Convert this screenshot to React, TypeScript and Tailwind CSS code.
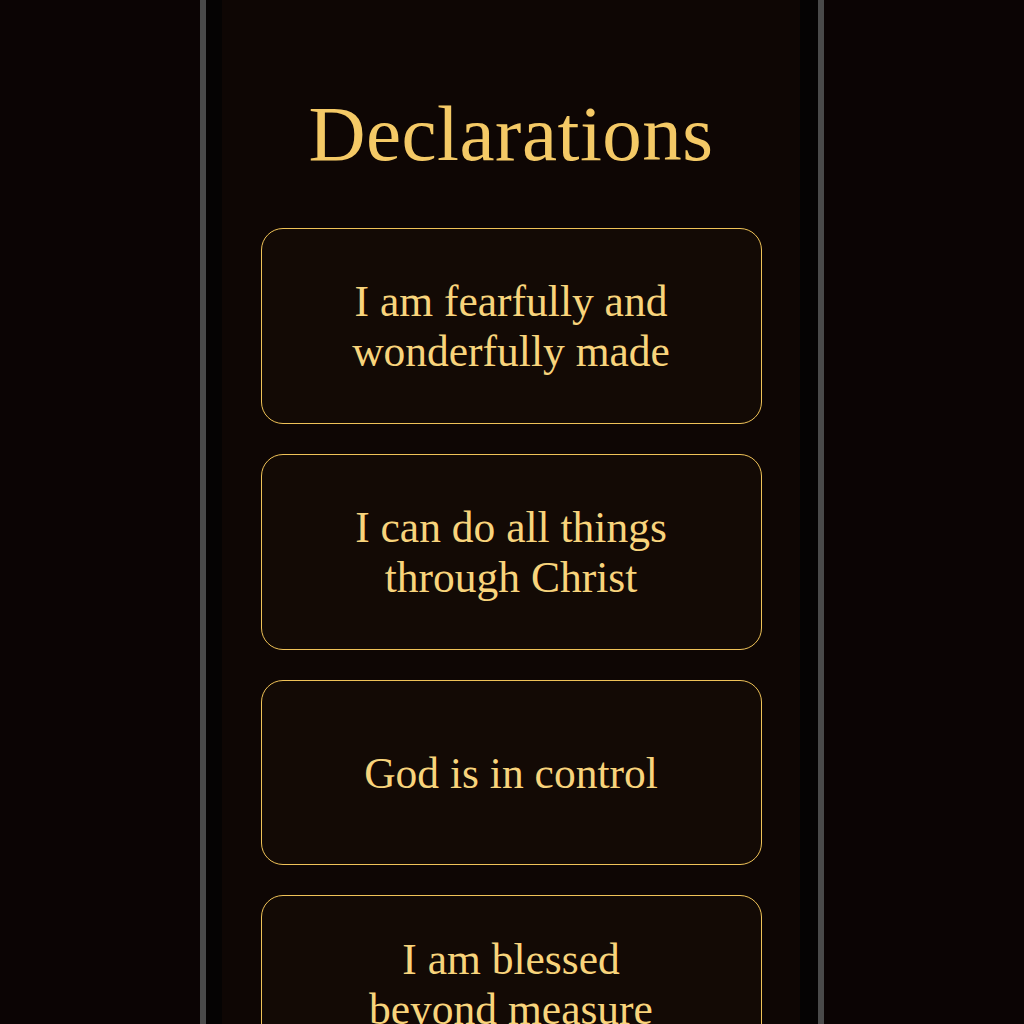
import React from "react";

const items = [
  ["I am fearfully and", "wonderfully made"],
  ["I can do all things", "through Christ"],
  ["God is in control"],
  ["I am blessed", "beyond measure"],
];

export default function App() {
  return (
    <div className="w-[1024px] h-[1024px] overflow-hidden bg-[#0b0404] flex justify-center" style={{ fontFamily: '"Liberation Serif", "DejaVu Serif", serif' }}>
      <div className="flex h-full">
        <div className="w-[6px] h-full bg-[#4a4a4a]" />
        <div className="w-[16px] h-full bg-[#050303]" />
        <div className="w-[578px] h-full bg-[#0e0604] flex flex-col items-center">
          <h1 className="mt-[90px] text-[79px] leading-[88px] text-[#f4c966] tracking-[0.5px]">Declarations</h1>
          <div className="mt-[50px] flex flex-col gap-[30px] w-[501px]">
            {items.map((lines, i) => (
              <div
                key={i}
                className={`rounded-[22px] border border-[#efc258] bg-[#130a05] flex flex-col items-center justify-center text-[43.5px] leading-[50px] text-[#f8d47c] ${i === 2 ? "h-[185px]" : "h-[196px]"} ${i === 3 ? "pb-[18px]" : ""}`}
              >
                {lines.map((l) => (
                  <div key={l}>{l}</div>
                ))}
              </div>
            ))}
          </div>
        </div>
        <div className="w-[18px] h-full bg-[#050303]" />
        <div className="w-[6px] h-full bg-[#4a4a4a]" />
      </div>
    </div>
  );
}
